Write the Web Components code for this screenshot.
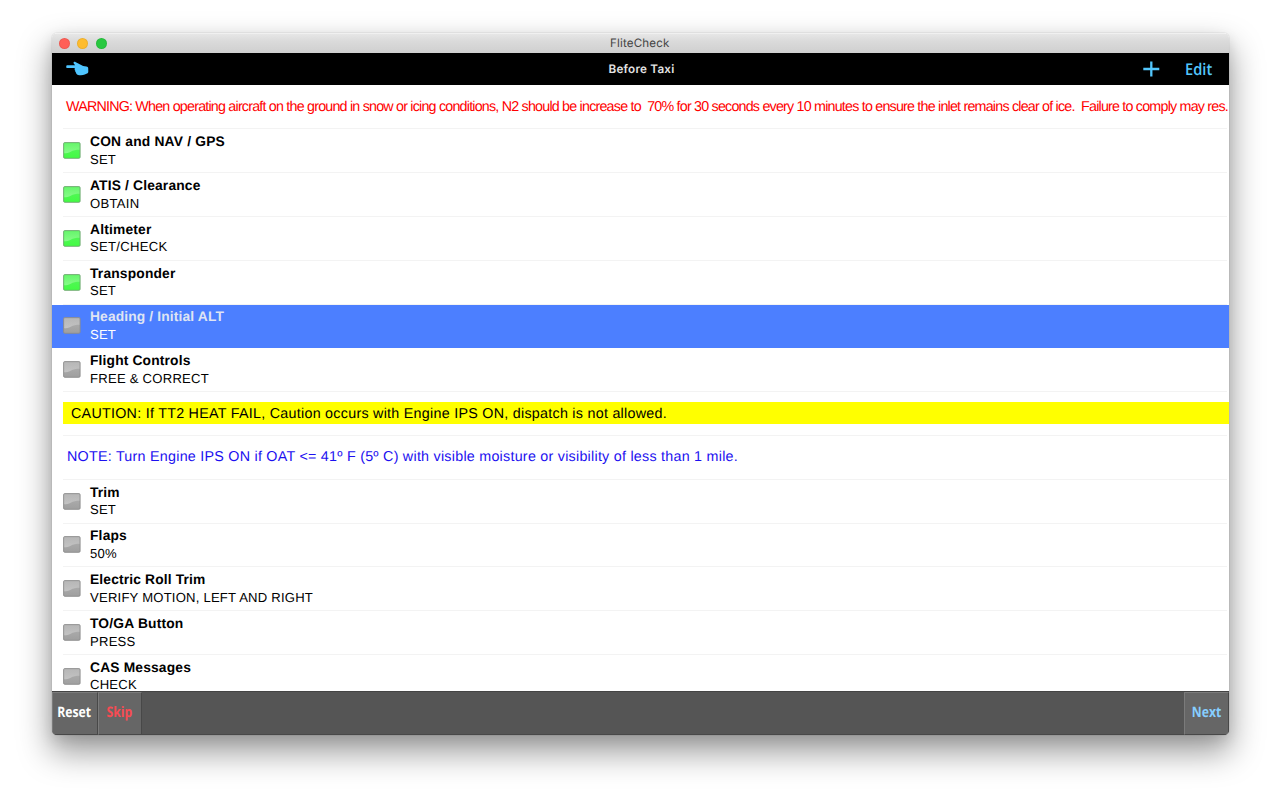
<!DOCTYPE html>
<html lang="en">
<head>
<meta charset="utf-8">
<title>FliteCheck</title>
<style>
html,body{margin:0;height:100%;background:#fff;overflow:hidden}
body{font-family:"Liberation Sans",Arial,sans-serif;text-rendering:geometricPrecision}
</style>
</head>
<body>
<flite-window></flite-window>
<script>
const define = (name, html, after) => customElements.define(name, class extends HTMLElement {
  connectedCallback() {
    if (this.shadowRoot) return;
    const t = document.createElement('template');
    t.innerHTML = html;
    this.attachShadow({mode: 'open'}).append(t.content.cloneNode(true));
    if (after) after(this, this.shadowRoot);
  }
});

/* A single line whose tracking is adjusted to fill a given width. */
define('tracked-line', `<style>
:host{display:block;white-space:pre}
span{display:inline-block}
</style><span><slot></slot></span>`, (el, root) => {
  const s = root.querySelector('span');
  const n = el.textContent.length;
  const natural = s.getBoundingClientRect().width;
  s.style.letterSpacing = ((+el.getAttribute('w') - natural) / n).toFixed(4) + 'px';
});

define('title-bar', `<style>
:host{display:flex;align-items:center;position:relative;height:19.5px;flex:none;box-sizing:border-box;
 background:linear-gradient(#e6e6e6,#dadada 40%,#cfcfcf);border-top:1px solid #f0f0f0;padding-left:7.3px;gap:7.4px;
 font:11.6px Inter,sans-serif;color:#444}
i{width:11px;height:11px;border-radius:50%;box-sizing:border-box;border:.5px solid #0001;margin-top:-.5px}
.r{background:#ff5f57}.y{background:#febc2e}.g{background:#28c840}
tracked-line{position:absolute;left:558.5px;top:2px;line-height:15px}
</style><i class="r"></i><i class="y"></i><i class="g"></i><tracked-line w="59.5">FliteCheck</tracked-line>`);

define('nav-bar', `<style>
:host{display:flex;align-items:center;justify-content:space-between;position:relative;height:32.7px;flex:none;background:#000;color:#53c6fc;padding:0 16px 0 14px;box-sizing:border-box}
svg{display:block}
.act{display:flex;align-items:center;gap:24.5px}
.edit{font:600 16.3px/24px "Open Sans",sans-serif;width:28px}
.edit span{display:inline-block;transform:scaleX(.9);transform-origin:0 50%}
.t{position:absolute;left:557px;top:8px;font:600 11.7px/17px Inter,sans-serif;color:#e4e4e4}
</style>
<svg width="23" height="16" viewBox="0 0 23 16"><path fill="#4fc5ff" d="M1.2 4.3h7.9L7.6 2.2C7.3 1.2 8.4.5 9.4 1l4.3 2.3 3.4 1.6c1.1.4 2.2.4 3.3.5 1.1.1 1.7.6 1.8 1.6l.1 3.6c0 1.1-.4 1.7-1.3 2l-2.2.9c-2 1-4.8 1-6.8.4-1.3-.5-1.9-1.2-2-2.3-.7-.4-.9-1.1-.7-1.9-.7-.6-.8-1.3-.5-2L8.6 7.1H1.2C-.1 7.1-.1 4.3 1.2 4.3z"/></svg>
<tracked-line class="t" w="66">Before Taxi</tracked-line>
<div class="act"><svg width="17" height="16" viewBox="0 0 17 16"><path d="M8.3 .5v15M.3 8h16" stroke="#53c6fc" stroke-width="2.3"/></svg><div class="edit"><span>Edit</span></div></div>`);

define('status-light', `<style>
:host{display:block;width:18px;height:17px}svg{display:block}
</style><svg width="18" height="17" viewBox="0 0 18 17"><defs>
<linearGradient id="a" x2="0" y2="1"><stop class="s1"/><stop offset="1" class="s2"/></linearGradient>
<linearGradient id="b" x2="0" y2="1"><stop stop-color="#fff" stop-opacity=".08"/><stop offset="1" stop-color="#fff" stop-opacity=".34"/></linearGradient></defs>
<rect class="f" x=".6" y=".6" width="16.5" height="15.7" rx="1.2" fill="url(#a)" stroke-width=".9"/>
<path d="M1.2 1.2h15.3v6.6c-3.5 0-6.3.6-8.8 1.9-2.2 1.1-4.3 1.6-6.5 1.6z" fill="url(#b)"/></svg>`, (el, root) => {
  const on = el.hasAttribute('on');
  root.querySelector('.s1').setAttribute('stop-color', on ? '#5cf562' : '#b2b2b2');
  root.querySelector('.s2').setAttribute('stop-color', on ? '#42fb43' : '#9f9f9f');
  root.querySelector('.f').setAttribute('stroke', on ? '#6fa571' : '#8c8c8c');
});

define('check-row', `<style>
:host{display:flex;height:43.8px;flex:none;box-sizing:border-box;padding:0 1.5px 0 11px;color:#000;--line:#f3f3f3}
:host([selected]){background:#4c7fff;color:#fff;--line:transparent}
.in{flex:1;display:flex;box-sizing:border-box;border-bottom:1px solid var(--line)}
status-light{margin-top:12.8px}
.tx{margin-left:9px;padding-top:3.8px}
.n{font-weight:700;font-size:13.8px;line-height:17.5px;display:block}
.v{font-size:13.1px;line-height:17.5px;display:block}
:host([selected]) .n{color:#dfe4f3}
</style><div class="in"><status-light></status-light><div class="tx"><div class="n"></div><div class="v"></div></div></div>`, (el, root) => {
  const light = document.createElement('status-light');
  light.toggleAttribute('on', el.hasAttribute('on'));
  root.querySelector('status-light').replaceWith(light);
  for (const [cls, txt, w] of [['n', 'name', 'nw'], ['v', 'value', 'vw']]) {
    const line = document.createElement('tracked-line');
    line.className = cls;
    line.textContent = el.getAttribute(txt);
    line.setAttribute('w', el.getAttribute(w));
    root.querySelector('.' + cls).replaceWith(line);
  }
});

define('note-row', `<style>
:host{display:flex;height:43.8px;flex:none;box-sizing:border-box;padding-left:11px;font-size:14.3px}
.in{flex:1;display:flex;flex-direction:column;box-sizing:border-box;min-width:0}
.bar{box-sizing:border-box;margin-top:10.3px;line-height:21.5px;height:21.5px;padding:1px 0 0 4px}
.line{margin:auto 1.5px 0 0;height:1px;background:#f3f3f3}
:host([kind=warning]){color:#f00}
:host([kind=warning]) .bar{padding-left:3px;margin-top:11.3px}
:host([kind=caution]) .bar{background:#ff0;padding:1.4px 0 0 8px;margin-top:9.9px}
:host([kind=note]){color:#1c10f0}
</style><div class="in"><div class="bar"><slot></slot></div><div class="line"></div></div>`);

define('tool-button', `<style>
:host{display:flex;justify-content:center;box-sizing:border-box;width:44.5px;height:43px;background:#666;border:1px solid #7b7b7b;border-right-color:#484848;border-bottom-color:#484848;font:700 14.5px/39px "Open Sans",sans-serif}
span{display:block;transform:scaleX(.84);white-space:nowrap}
</style><span><slot></slot></span>`);

define('tool-bar', `<style>
:host{display:flex;height:44px;flex:none;box-sizing:border-box;background:#555;border-top:1px solid #444;border-bottom:1px solid #484848}
.gap{flex:1}
</style><tool-button style="color:#fff;width:46px">Reset</tool-button><tool-button style="color:#f84b53">Skip</tool-button><div class="gap"></div><tool-button style="color:#87ceff">Next</tool-button>`);

define('flite-window', `<style>
:host{display:block;box-sizing:border-box;padding:33px 51.5px 0 51.5px;height:800px}
.shadow{border-radius:5px;box-shadow:0 0 1px #0006,0 16px 32px 2px rgba(0,0,0,.38),0 5px 14px rgba(0,0,0,.1)}
.win{height:702px;display:flex;flex-direction:column;border-radius:5px;overflow:hidden;background:#fff}
.list{flex:1;min-height:0;overflow:hidden;display:flex;flex-direction:column;padding-left:.5px}
</style><div class="shadow"><div class="win">
<title-bar></title-bar><nav-bar></nav-bar>
<div class="list">
<note-row kind="warning" style="height:44.3px"><tracked-line w="1162">WARNING: When operating aircraft on the ground in snow or icing conditions, N2 should be increase to  70% for 30 seconds every 10 minutes to ensure the inlet remains clear of ice.  Failure to comply may res.</tracked-line></note-row>
<check-row on name="CON and NAV / GPS" nw="135" value="SET" vw="26"></check-row>
<check-row on name="ATIS / Clearance" nw="110.5" value="OBTAIN" vw="49.5"></check-row>
<check-row on name="Altimeter" nw="61.5" value="SET/CHECK" vw="77.5"></check-row>
<check-row on name="Transponder" nw="85.5" value="SET" vw="26"></check-row>
<check-row selected name="Heading / Initial ALT" nw="134" value="SET" vw="26"></check-row>
<check-row name="Flight Controls" nw="100.5" value="FREE &amp; CORRECT" vw="119"></check-row>
<note-row kind="caution"><tracked-line w="596">CAUTION: If TT2 HEAT FAIL, Caution occurs with Engine IPS ON, dispatch is not allowed.</tracked-line></note-row>
<note-row kind="note"><tracked-line w="671">NOTE: Turn Engine IPS ON if OAT &lt;= 41º F (5º C) with visible moisture or visibility of less than 1 mile.</tracked-line></note-row>
<check-row name="Trim" nw="29.5" value="SET" vw="26"></check-row>
<check-row name="Flaps" nw="37" value="50%" vw="27"></check-row>
<check-row name="Electric Roll Trim" nw="115.5" value="VERIFY MOTION, LEFT AND RIGHT" vw="223"></check-row>
<check-row name="TO/GA Button" nw="93.5" value="PRESS" vw="45.5"></check-row>
<check-row name="CAS Messages" nw="101" value="CHECK" vw="47"></check-row>
</div>
<tool-bar></tool-bar></div></div>`);
</script>
</body>
</html>
